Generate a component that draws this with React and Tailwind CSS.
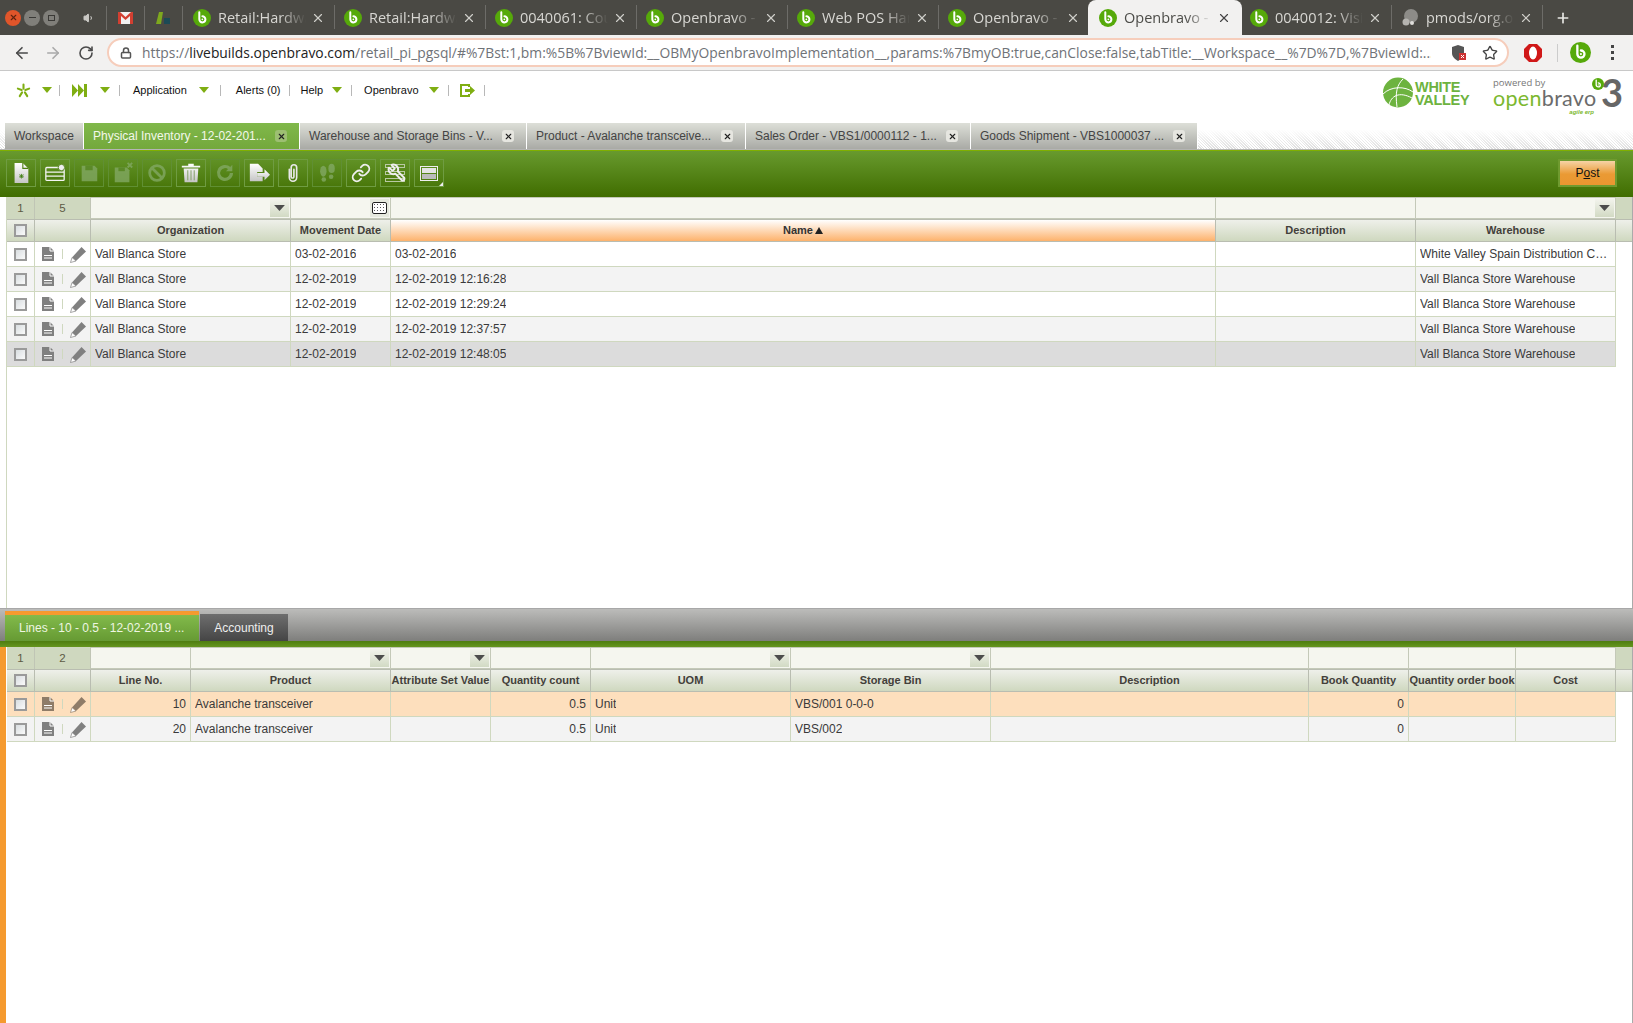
import React from "react";
import { ArrowLeft, ArrowRight, RotateCw, Lock, Star, X, Plus, Link as LinkIcon, Wrench, Volume1 } from "lucide-react";

const ObIcon = ({ size = 18 }) => (
  <svg width={size} height={size} viewBox="0 0 20 20" className="shrink-0">
    <circle cx="10" cy="10" r="10" fill="#56a90a" />
    <path d="M7 3.5v8a3.4 3.4 0 1 0 3.4-3.4" fill="none" stroke="#fff" strokeWidth="2.2" strokeLinecap="round" />
    <circle cx="10.4" cy="11.5" r="1" fill="#fff" />
  </svg>
);

const Sep = ({ h = "h-[24px]" }) => <div className={`w-px ${h} bg-[#6d6c68] shrink-0`} />;

const Tab = ({ title, active, pm, noSep }) => (
  <div className="relative w-[151px] h-full shrink-0 flex items-center">
    {active && <div className="absolute left-[-1px] right-[-2px] top-0 bottom-0 bg-[#f2f1f0] rounded-t-[8px]" />}
    <div className="relative flex items-center w-full pl-[10px]">
      {pm ? (
        <svg width="18" height="18" viewBox="0 0 18 18" className="shrink-0"><circle cx="10" cy="7" r="7" fill="#8d8c88" /><circle cx="5" cy="13" r="3.5" fill="#b5b4b0" /><circle cx="11" cy="14" r="2" fill="#dfdedb" /></svg>
      ) : <ObIcon />}
      <div className={`ml-[7px] w-[88px] overflow-hidden whitespace-nowrap text-[14.5px] font-['Open_Sans',sans-serif] ${active ? "text-[#4c4c48]" : "text-[#d8d7d3]"}`}
        style={{ maskImage: "linear-gradient(to right,#000 70%,transparent)", WebkitMaskImage: "linear-gradient(to right,#000 70%,transparent)" }}>{title}</div>
      <X size={14} strokeWidth={2} className={`ml-[5px] shrink-0 ${active ? "text-[#444]" : "text-[#cfcec9]"}`} />
    </div>
    {!active && !noSep && <div className="absolute right-[-1px] top-[5px]"><Sep /></div>}
  </div>
);

const ChromeTabs = () => (
  <div className="h-[35px] bg-[#4a4944] flex items-center shrink-0 relative">
    <div className="flex items-center gap-[3px] ml-[5px] w-[57px]">
      <div className="w-[16px] h-[16px] rounded-full bg-[#e0552a] flex items-center justify-center"><X size={9} strokeWidth={3} className="text-[#5c2410]" /></div>
      <div className="w-[16px] h-[16px] rounded-full bg-[#807f7a] flex items-center justify-center"><div className="w-[7px] h-px bg-[#3a3936]" /></div>
      <div className="w-[16px] h-[16px] rounded-full bg-[#807f7a] flex items-center justify-center"><div className="w-[7px] h-[6px] border border-[#3a3936]" /></div>
    </div>
    <div className="w-[44px] flex justify-end pr-[11px]"><Volume1 size={12} className="text-[#c9c8c4] fill-[#c9c8c4]" /></div>
    <Sep />
    <div className="w-[37px] flex justify-center shrink-0">
      <svg width="15" height="12" viewBox="0 0 15 12"><rect width="15" height="12" fill="#f1f1f1" /><path d="M0 0v12h3V4l4.500 4L12 4v8h3V0h-2L7.500 5 2 0z" fill="#d23f31" /></svg>
    </div>
    <Sep />
    <div className="w-[37px] flex justify-center shrink-0">
      <svg width="15" height="14" viewBox="0 0 15 14"><path d="M3 1h4L5 13H0z" fill="#7ea81e" /><rect x="8" y="7" width="6" height="6" fill="#1c4a55" /></svg>
    </div>
    <Sep />
    {["Retail:Hardware", "Retail:Hardware", "0040061: Cou", "Openbravo - ", "Web POS Hard"].map((t, i) => <Tab key={i} title={t} />)}
    <Tab title="Openbravo - " noSep />
    <Tab title="Openbravo - " active />
    <Tab title="0040012: Visit" />
    <Tab title="pmods/org.op" pm />
    <Plus size={16} strokeWidth={2.5} className="text-[#e8e7e4] ml-[13px]" />
  </div>
);

const UrlBar = () => (
  <div className="h-[36px] bg-[#f2f1f0] border-b border-[#c8c8c8] flex items-center shrink-0">
    <ArrowLeft size={18} strokeWidth={2.2} className="ml-[13px] text-[#4a4a4a]" />
    <ArrowRight size={18} strokeWidth={2.2} className="ml-[13px] text-[#a9a9a9]" />
    <RotateCw size={16} strokeWidth={2.4} className="ml-[16px] text-[#4a4a4a]" />
    <div className="ml-[13px] w-[1402px] h-[29px] bg-white rounded-full border-2 border-[#f6cdbb] flex items-center">
      <Lock size={12} strokeWidth={3} className="ml-[11px] text-[#555] shrink-0" />
      <div className="ml-[10px] pt-px w-[1289px] overflow-hidden whitespace-nowrap text-[13.85px] font-['Open_Sans',sans-serif] text-[#6f7378]">
        https://<span className="text-[#222]">livebuilds.openbravo.com</span>/retail_pi_pgsql/#%7Bst:1,bm:%5B%7BviewId:__OBMyOpenbravoImplementation__,params:%7BmyOB:true,canClose:false,tabTitle:__Workspace__%7D%7D,%7BviewId:...
      </div>
      <svg width="16" height="18" viewBox="0 0 16 18" className="ml-[20px] shrink-0"><path d="M7 1l6 2v6c0 4-3 6-6 8-3-2-6-4-6-8V3z" fill="#555" /><rect x="8" y="9" width="7" height="7" fill="#c33" /><path d="M10 11l3 3m0-3l-3 3" stroke="#fff" /></svg>
      <Star size={16} strokeWidth={2} className="ml-[15px] text-[#444] shrink-0" />
    </div>
    <svg width="18" height="20" viewBox="0 0 18 20" className="ml-[15px]"><path d="M5 1h8l5 5v8l-5 5H5l-5-5V6z" fill="#d01818" /><ellipse cx="9" cy="10" rx="4" ry="6.500" fill="#fff" /></svg>
    <div className="ml-[15px] w-px h-[18px] bg-[#ccc]" />
    <div className="ml-[12px]"><ObIcon size={21} /></div>
    <div className="ml-[20px] flex flex-col gap-[3px]">
      <div className="w-[3px] h-[3px] bg-[#444]" /><div className="w-[3px] h-[3px] bg-[#444]" /><div className="w-[3px] h-[3px] bg-[#444]" />
    </div>
  </div>
);

const Caret = ({ cls }) => (
  <svg width="10" height="6" viewBox="0 0 10 6" className={`shrink-0 ${cls || ""}`}><path d="M0 0h10L5 6z" fill="#7fae12" /></svg>
);
const MSep = ({ cls }) => <div className={`w-px h-[11px] bg-[#b8b8b8] shrink-0 ${cls || ""}`} />;

const Menu = () => (
  <div className="h-[52px] bg-white shrink-0 flex justify-between font-['Liberation_Sans',sans-serif] text-[11px] text-[#111]">
    <div className="flex items-center h-[38px] pl-[16px]">
      <svg width="15" height="15" viewBox="0 0 16 16"><g stroke="#7fae12" strokeWidth="2.200" strokeLinecap="round"><path d="M8 6V1.500M10 7.500l4-1.500M9.500 10l2.500 4M6.500 10L4 14M6 7.500L2 6" /></g></svg>
      <Caret cls="ml-[11px]" /><MSep cls="ml-[7px]" />
      <svg width="15" height="13" viewBox="0 0 15 13" className="ml-[12px]"><path d="M0 0l6 6.500L0 13zM6 0l6 6.500L6 13zM12 0h3v13h-3z" fill="#7fae12" /></svg>
      <Caret cls="ml-[13px]" /><MSep cls="ml-[9px]" />
      <span className="ml-[13px]">Application</span>
      <Caret cls="ml-[12px]" /><MSep cls="ml-[11px]" />
      <span className="ml-[15px]">Alerts (0)</span>
      <MSep cls="ml-[9px]" />
      <span className="ml-[10px]">Help</span>
      <Caret cls="ml-[9px]" /><MSep cls="ml-[9px]" />
      <span className="ml-[12px]">Openbravo</span>
      <Caret cls="ml-[10px]" /><MSep cls="ml-[9px]" />
      <svg width="15" height="13" viewBox="0 0 15 13" className="ml-[11px]"><path d="M9 3V1H1v11h8v-2" fill="none" stroke="#7fae12" strokeWidth="2" /><path d="M5 5h5V2l5 4.500L10 11V8H5z" fill="#7fae12" /></svg>
      <MSep cls="ml-[9px]" />
    </div>
    <div className="flex items-start pt-[6px] pr-[10px]">
      <svg width="30" height="31" viewBox="0 0 30 31" className="shrink-0">
        <circle cx="15" cy="15.500" r="15" fill="#6db33f" />
        <path d="M0 17C8 9 22 9 30 15M6 28C8 19 16 14 29 21M20 2C14 8 12 15 14 30" fill="none" stroke="#fff" strokeWidth="1" />
      </svg>
      <div className="ml-[2px] mt-[4px] w-[58px] text-[14.5px] leading-[12.500px] font-bold text-[#6db33f] font-['Liberation_Sans',sans-serif]">
        <div className="tracking-[-0.3px]">WHITE</div><div className="tracking-[-0.3px]">VALLEY</div>
      </div>
      <div className="ml-[20px] relative w-[105px] h-[38px] shrink-0">
        <div className="text-[9.500px] leading-[10px] text-[#777] mt-[1px] font-['Open_Sans',sans-serif]">powered by</div>
        <div className="text-[21.500px] leading-[22px] font-['Lato',sans-serif] tracking-[0.3px] -mt-[1px]"><span className="text-[#7cb82f]">open</span><span className="text-[#6b6b6b]">bravo</span></div>
        <div className="absolute right-[4px] top-[32px] text-[6px] leading-[7px] italic font-bold text-[#7cb82f]">agile erp</div>
      </div>
      <div className="relative w-[25px] h-[34px] -mt-[2px] shrink-0">
        <div className="absolute left-[-6px] top-[3px]"><ObIcon size={12} /></div>
        <div className="text-[38px] leading-[34px] font-bold text-[#666] font-['Lato',sans-serif] text-right">3</div>
      </div>
    </div>
  </div>
);

const CloseBadge = ({ dark }) => (
  <div className={`w-[12px] h-[12px] rounded-[3px] flex items-center justify-center shrink-0 ${dark ? "bg-[#9dbf72]" : "bg-[#e6e6e0]"}`}><X size={9} strokeWidth={3} className="text-[#222]" /></div>
);

const AppTab = ({ w, title, active, close = true, pr = "pr-[12px]" }) => (
  <div className={`h-[26px] ${w} shrink-0 flex items-center pl-[9px] ${pr} justify-between text-[12px] whitespace-nowrap overflow-hidden border-r border-white ${active ? "text-[#f3f8ea] bg-[linear-gradient(#80b84a,#73a83c)]" : "text-[#444] bg-[linear-gradient(#dddfd8,#a9aaa5)]"}`}>
    <span>{title}</span>{close && <CloseBadge dark={active} />}
  </div>
);

const AppTabs = () => (
  <div className="h-[27px] shrink-0 flex pl-[5px] border-b border-[#b5b5b5] font-['Liberation_Sans',sans-serif] bg-[linear-gradient(#fff_25%,transparent),repeating-linear-gradient(45deg,#fff_0,#fff_1px,#dedede_1px,#dedede_2px)]">
    <AppTab w="w-[79px]" title="Workspace" close={false} />
    <AppTab w="w-[216px]" title="Physical Inventory - 12-02-201..." active />
    <AppTab w="w-[227px]" title="Warehouse and Storage Bins - V..." />
    <AppTab w="w-[219px]" title="Product - Avalanche transceive..." />
    <AppTab w="w-[225px]" title="Sales Order - VBS1/0000112 - 1..." />
    <AppTab w="w-[227px]" title="Goods Shipment - VBS1000037 ..." />
  </div>
);

const TB = ({ children, off }) => (
  <div className={`w-[30px] h-[28px] shrink-0 border flex items-center justify-center relative ${off ? "border-[#608f33]" : "border-[#6f9c42]"}`}>
    <svg width="24" height="22" viewBox="0 0 26 24" fill={off ? "#82a863" : "url(#wg)"} className={off ? "opacity-80" : ""}>
      <defs><linearGradient id="wg" x1="0" y1="0" x2="0" y2="1"><stop offset="0" stopColor="#fff" /><stop offset="1" stopColor="#c5c5c5" /></linearGradient></defs>
      {children}
    </svg>
  </div>
);

const Toolbar = () => (
  <div className="h-[47px] shrink-0 border-t border-[#7fb000] bg-[linear-gradient(#689a2e,#406d00)] flex items-start pt-[8px] pl-[6px] pr-[16px] gap-[4px] font-['Liberation_Sans',sans-serif]">
    <TB><path d="M6 1h9l6 6v16H6z" /><path d="M15 1v6h6" fill="none" stroke="#4f7d14" strokeWidth="1.200" /><path d="M13.500 13v5M11 15.500h5M11.500 13.500l4 4M15.500 13.500l-4 4" stroke="#3e7d10" strokeWidth="0.900" /></TB>
    <TB><g fill="none" stroke="#f4f4f4" strokeWidth="1.400"><rect x="3" y="6" width="20" height="14" rx="1" /><path d="M3 11h20M3 15.500h20" /></g><circle cx="20" cy="6" r="3.500" fill="#eee" stroke="#52801b" /></TB>
    <TB off><path d="M5 4h14l3 3v14H5z" /><rect x="9" y="4" width="8" height="5" fill="#5c8a2c" /></TB>
    <TB off><path d="M4 6h13l3 3v13H4z" /><rect x="8" y="6" width="7" height="4" fill="#5c8a2c" /><path d="M18 1l5 5m0-5l-5 5" stroke="#82a863" strokeWidth="2" /></TB>
    <TB off><circle cx="13" cy="12" r="8" fill="none" stroke="#82a863" strokeWidth="3" /><path d="M7.500 6.500l11 11" stroke="#82a863" strokeWidth="3" /></TB>
    <TB><path d="M3 4h20v2H3zM10 2h6v2h-6zM5 7h16l-1 15H6z" /><path d="M9.500 9v11M13 9v11M16.500 9v11" stroke="#7b9a5c" strokeWidth="1" /></TB>
    <TB off><path d="M20 12a7 7 0 1 1-2-5" fill="none" stroke="#82a863" strokeWidth="3.500" /><path d="M21 3v7h-7z" /></TB>
    <TB><path d="M3 2h9l5 5v4h-6v5h6v5H3z" /><path d="M11 12h8V8l6 6-6 6v-4h-8z" /></TB>
    <TB><path d="M9 8v9a4 4 0 0 0 8 0V6a3 3 0 0 0-6 0v10a1.500 1.500 0 0 0 3 0V8" fill="none" stroke="#e8e8e8" strokeWidth="1.800" strokeLinecap="round" /></TB>
    <TB off><ellipse cx="9" cy="10" rx="3.500" ry="6" /><ellipse cx="9.500" cy="19" rx="2.500" ry="2.500" /><ellipse cx="18" cy="7" rx="3.500" ry="5" /><ellipse cx="17.500" cy="16" rx="2.500" ry="2.500" /></TB>
    <div className="w-[30px] h-[28px] shrink-0 border border-[#6f9c42] flex items-center justify-center"><LinkIcon size={20} strokeWidth={2.2} className="text-[#eee]" /></div>
    <div className="w-[30px] h-[28px] shrink-0 border border-[#6f9c42] flex items-center justify-center relative">
      <div className="flex flex-col gap-[3px]"><div className="w-[20px] h-[4px] border border-[#b9c9a3]" /><div className="w-[20px] h-[4px] border border-[#b9c9a3]" /><div className="w-[20px] h-[4px] border border-[#b9c9a3]" /></div>
      <Wrench size={19} strokeWidth={2.5} className="absolute right-[3px] top-[3px] text-[#eee] -scale-x-100" />
    </div>
    <div className="w-[30px] h-[28px] shrink-0 border border-[#6f9c42] flex items-center justify-center relative">
      <div className="w-[18px] h-[15px] border border-[#eee] flex flex-col gap-[1px] p-px"><div className="flex-1 bg-[#e4e4e4]" /><div className="flex-1 bg-[#bbb]" /></div>
      <svg width="4" height="4" viewBox="0 0 5 5" className="absolute right-0 bottom-0"><path d="M5 0v5H0z" fill="#eee" /></svg>
    </div>
    <div className="ml-auto w-[59px] h-[28px] shrink-0 border-2 border-[#6f9a2f] bg-[linear-gradient(#f6d3a6,#ea9a34_55%,#e99630)] flex items-center justify-center text-[12px] text-[#111]">
      <span>P<span className="underline underline-offset-[1px]">o</span>st</span>
    </div>
  </div>
);

const cellB = "border-r border-b border-[#cfd8bf]";

const Check = () => (
  <div className="w-[13px] h-[13px] border-2 border-[#9a9a9a] bg-[linear-gradient(135deg,#d8dde0,#fafafa)]" />
);

const RowIcons = ({ tone = "#808080" }) => (
  <div className="flex items-center pl-[6px]">
    <svg width="14" height="16" viewBox="0 0 14 16"><path d="M1 1h8l4 4v10H1z" fill={tone} /><path d="M9 1v4h4" fill="none" stroke="#fff" strokeWidth="1" /><path d="M3 9.500h8M3 12h8" stroke="#fff" strokeWidth="1" /></svg>
    <div className="ml-[7px] w-px h-[10px] bg-[#cfd8bf]" />
    <svg width="17" height="17" viewBox="0 0 17 17" className="ml-[7px] mt-[1px]"><path d="M11.500 1l4.500 4.500L6 15l-4-3.500z" fill={tone} /><path d="M2 11.500L0.500 16.500 6 15z" fill="#fff" stroke={tone} strokeWidth="0.700" /></svg>
  </div>
);

const FilterArrow = () => (
  <div className="absolute right-[1px] top-[1px] bottom-[1px] w-[19px] bg-[linear-gradient(#f2f3ec,#d2dac4)] flex items-center justify-center">
    <svg width="11" height="6" viewBox="0 0 9 5"><path d="M0 0h9L4.500 5z" fill="#4c4c4c" /></svg>
  </div>
);
const FilterCal = () => (
  <div className="absolute right-[1px] top-[1px] bottom-[1px] w-[19px] bg-[#e6e9de] flex items-center justify-center">
    <div className="w-[15px] h-[12px] rounded-[2px] border border-[#222] bg-white bg-[radial-gradient(#555_0.6px,transparent_0.8px)] bg-[length:3px_3px]" />
  </div>
);

const Grid = ({ cols, counts, rows }) => (
  <div className="flex-1 bg-white border-r border-[#aaa] min-w-0 font-['Liberation_Sans',sans-serif]">
    <div className="flex h-[22px] bg-[#cfd8bf]">
      <div className="w-[28px] shrink-0 text-center text-[11.500px] leading-[23px] text-[#5d5a44] border-r border-[#c0c5b5]">{counts[0]}</div>
      <div className="w-[56px] shrink-0 text-center text-[11.500px] leading-[23px] text-[#5d5a44] border-r border-[#c0c5b5]">{counts[1]}</div>
      {cols.map((c, i) => (
        <div key={i} className="shrink-0 relative border border-[#c4c9b8] border-l-0 bg-[#f5f6ef]" style={{ width: c.w }}>
          {c.filter === "arrow" && <FilterArrow />}
          {c.filter === "cal" && <FilterCal />}
        </div>
      ))}
    </div>
    <div className="flex h-[23px] border-y border-[#b9bdb1] bg-[linear-gradient(#eef0ea,#cfd8bf)] text-[11px] font-bold text-[#43403a]">
      <div className="w-[28px] shrink-0 border-r border-[#b9bdb1] flex items-center justify-center"><Check /></div>
      <div className="w-[56px] shrink-0 border-r border-[#b9bdb1]" />
      {cols.map((c, i) => (
        <div key={i} className={`shrink-0 border-r border-[#b9bdb1] flex items-center justify-center whitespace-nowrap overflow-hidden ${c.sorted ? "bg-[linear-gradient(#fff,#fdb26c)] text-[#333]" : ""}`} style={{ width: c.w }}>
          {c.t}{c.sorted && <svg width="8" height="7" viewBox="0 0 8 7" className="ml-[2px]"><path d="M0 7h8L4 0z" fill="#222" /></svg>}
        </div>
      ))}
    </div>
    {rows.map((r, ri) => (
      <div key={ri} className="flex h-[25px] text-[12px] text-[#3a3a3a]">
        <div className={`w-[28px] shrink-0 ${cellB} ${r.bg} flex items-center justify-center`}><Check /></div>
        <div className={`w-[56px] shrink-0 ${cellB} ${r.bg} flex items-center`}><RowIcons tone={r.tone} /></div>
        {cols.map((c, i) => (
          <div key={i} className={`shrink-0 ${cellB} ${r.bg} flex items-center px-[4px] overflow-hidden whitespace-nowrap ${c.right ? "justify-end" : ""}`} style={{ width: c.w }}>
            <span className="overflow-hidden text-ellipsis">{r.v[i]}</span>
          </div>
        ))}
      </div>
    ))}
  </div>
);

const upperCols = [
  { t: "Organization", w: 200, filter: "arrow" },
  { t: "Movement Date", w: 100, filter: "cal" },
  { t: "Name", w: 825, sorted: true },
  { t: "Description", w: 200 },
  { t: "Warehouse", w: 200, filter: "arrow" },
];
const W = "Vall Blanca Store Warehouse";
const upperRows = [
  { bg: "bg-white", v: ["Vall Blanca Store", "03-02-2016", "03-02-2016", "", "White Valley Spain Distribution Center"] },
  { bg: "bg-[#f3f3f3]", v: ["Vall Blanca Store", "12-02-2019", "12-02-2019 12:16:28", "", W] },
  { bg: "bg-white", v: ["Vall Blanca Store", "12-02-2019", "12-02-2019 12:29:24", "", W] },
  { bg: "bg-[#f3f3f3]", v: ["Vall Blanca Store", "12-02-2019", "12-02-2019 12:37:57", "", W] },
  { bg: "bg-[#dcdcdc]", v: ["Vall Blanca Store", "12-02-2019", "12-02-2019 12:48:05", "", W] },
];
const lowerCols = [
  { t: "Line No.", w: 100, right: true },
  { t: "Product", w: 200, filter: "arrow" },
  { t: "Attribute Set Value", w: 100, filter: "arrow" },
  { t: "Quantity count", w: 100, right: true },
  { t: "UOM", w: 200, filter: "arrow" },
  { t: "Storage Bin", w: 200, filter: "arrow" },
  { t: "Description", w: 318 },
  { t: "Book Quantity", w: 100, right: true },
  { t: "Quantity order book", w: 107, right: true },
  { t: "Cost", w: 100, right: true },
];
const lowerRows = [
  { bg: "bg-[#fddfbd]", tone: "#8f7c68", v: ["10", "Avalanche transceiver", "", "0.5", "Unit", "VBS/001 0-0-0", "", "0", "", ""] },
  { bg: "bg-[#f3f3f3]", v: ["20", "Avalanche transceiver", "", "0.5", "Unit", "VBS/002", "", "0", "", ""] },
];

const SubTabs = () => (
  <div className="h-[39px] shrink-0 flex flex-col font-['Liberation_Sans',sans-serif]">
    <div className="flex-1 border-t border-[#a8a8a8] pl-[5px] pt-[2px] flex items-end gap-px bg-[linear-gradient(#bcbcba,#7e7e7c)]">
      <div className="w-[194px] h-[30px] border-t-[4px] border-[#f59a2f] bg-[linear-gradient(#82ba4b,#669a33)] text-[12px] text-[#eef6e2] flex items-center pl-[14px]">Lines - 10 - 0.5 - 12-02-2019 ...</div>
      <div className="w-[88px] h-[27px] bg-[linear-gradient(#6e6e6e,#454545)] text-[12px] text-[#eee] flex items-center justify-center">Accounting</div>
    </div>
    <div className="h-[6px] bg-[linear-gradient(#4e7d10,#65951f)]" />
  </div>
);

export default function App() {
  return (
    <div className="w-[1633px] h-[1023px] overflow-hidden flex flex-col bg-white">
      <ChromeTabs />
      <UrlBar />
      <Menu />
      <AppTabs />
      <Toolbar />
      <div className="h-[411px] shrink-0 ml-[6px] border-l border-[#cfd8bf] flex">
        <Grid cols={upperCols} counts={[1, 5]} rows={upperRows} />
      </div>
      <SubTabs />
      <div className="flex-1 flex min-h-0">
        <div className="w-[6px] bg-[#f59a2f] shrink-0" />
        <div className="w-px bg-white shrink-0" />
        <Grid cols={lowerCols} counts={[1, 2]} rows={lowerRows} />
      </div>
    </div>
  );
}
